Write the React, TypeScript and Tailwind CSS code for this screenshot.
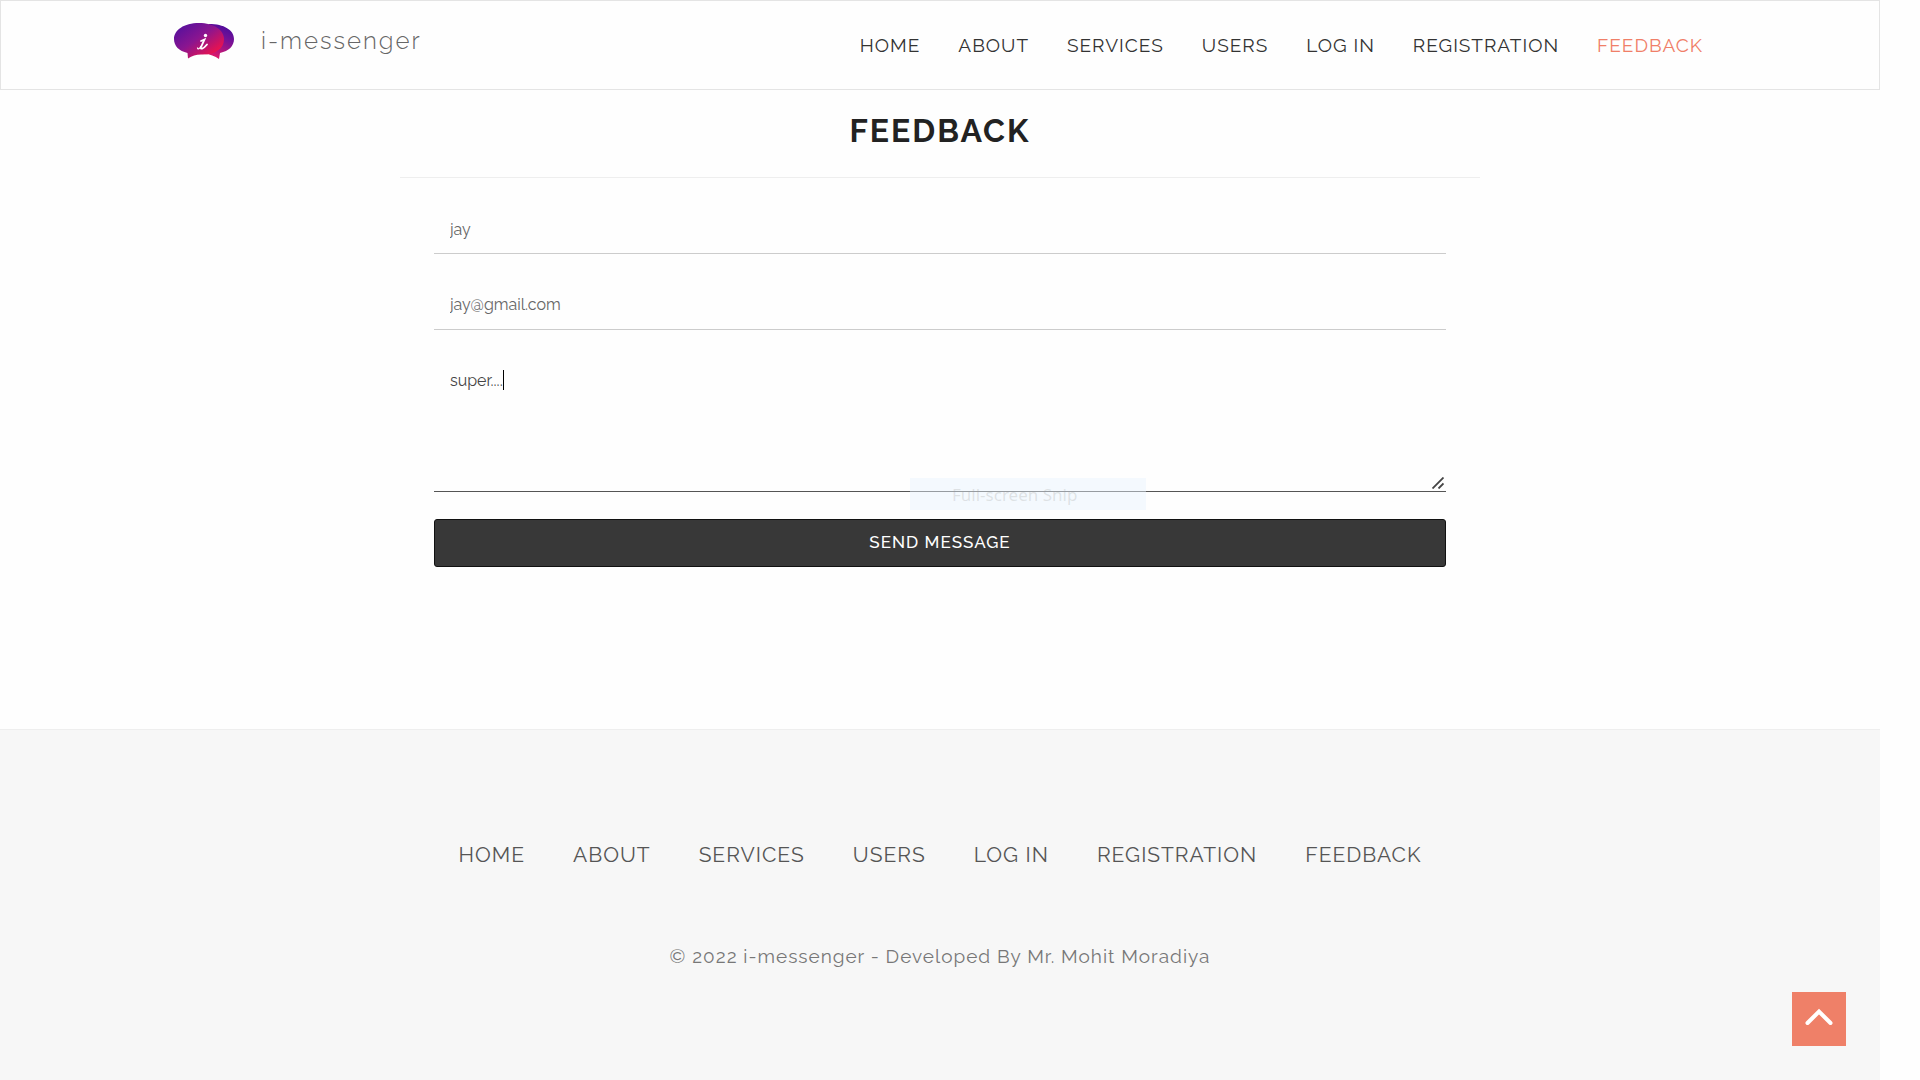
const links = ["HOME", "ABOUT", "SERVICES", "USERS", "LOG IN", "REGISTRATION", "FEEDBACK"];

function Logo() {
  return (
    <svg viewBox="0 0 62 38" className="h-[38px] w-[62px]" aria-hidden="true">
      <defs>
        <linearGradient id="bubbleLeft" x1="0" y1="0" x2="1" y2="1">
          <stop offset="0" stopColor="#4a0fa0" />
          <stop offset="0.45" stopColor="#8a1590" />
          <stop offset="0.85" stopColor="#f0124a" />
        </linearGradient>
        <linearGradient id="bubbleRight" x1="1" y1="0" x2="0.6" y2="1">
          <stop offset="0" stopColor="#3d0a9e" />
          <stop offset="0.5" stopColor="#7a1296" />
          <stop offset="1" stopColor="#d8186c" />
        </linearGradient>
      </defs>
      <path
        d="M36 2 C51 2 61 8 61 17 C61 24 56 29 47 31 L46 37 C42 34 37 32 31 32 Z"
        fill="url(#bubbleRight)"
      />
      <path
        d="M26 1 C41 1 51 8 51 17 C51 27 42 33 28 32.500 C23 32.500 19 34 15 36.500 L14.500 31 C6 29 1 24 1 17 C1 8 11 1 26 1 Z"
        fill="url(#bubbleLeft)"
      />
      <circle cx="32.500" cy="13.500" r="1.700" fill="#fff" />
      <path
        d="M28 19 L31.500 17.500 L28 25 C27 27.500 30 27.500 34 22.500"
        fill="none"
        stroke="#fff"
        strokeWidth="1.800"
        strokeLinecap="round"
      />
      <path d="M28 24 C27 27 24.500 28 24.500 25.500" fill="none" stroke="#fff" strokeWidth="1.200" />
    </svg>
  );
}

export default function App() {
  return (
    <div className="min-h-screen bg-[#fefefe] pr-10 font-['Raleway','Lato',sans-serif] font-normal">
      <div className="flex min-h-screen flex-col">
        <header className="flex h-[90px] items-center justify-between border border-[#e4e4e4] pr-[176px] pl-[172px]">
          <a href="#home" className="flex items-center gap-[26px] pb-2 text-2xl font-light tracking-[2px] text-[#666]">
            <Logo />
            i-messenger
          </a>
          <nav className="flex gap-[38px] text-[19px] tracking-[1px] text-[#333]">
            {links.map((l) => (
              <a key={l} href={`#${l}`} className="last:text-[#f07f68]">
                {l}
              </a>
            ))}
          </nav>
        </header>

        <main className="mx-auto w-full max-w-[1080px] flex-1">
          <h1 className="border-b border-[#eee] pt-[21px] pb-[26px] text-center text-[32px] leading-10 font-bold tracking-[2px] text-[#222]">
            FEEDBACK
          </h1>
          <form className="mx-[34px] flex flex-col pt-7 text-base text-[#666]" onSubmit={(e) => e.preventDefault()}>
            <input
              aria-label="Name"
              defaultValue="jay"
              className="h-12 border-b border-[#ccc] px-4 outline-none"
            />
            <input
              aria-label="Email"
              type="email"
              defaultValue="jay@gmail.com"
              className="mt-7 h-12 border-b border-[#ccc] px-4 pb-[2px] outline-none"
            />
            <div className="relative mt-7">
              <textarea
                aria-label="Message"
                defaultValue="super...."
                className="block h-[134px] w-full resize-none border-b border-[#555] px-4 py-[11px] text-[#444] outline-none"
              />
              <span className="absolute top-3 left-[69px] h-5 w-px bg-black" />
              <svg viewBox="0 0 12 12" className="absolute right-[2px] bottom-[3px] size-3 text-[#444]" aria-hidden="true">
                <path d="M0.500 11.500L11.500 0.500M6.500 11.500L11.500 6.500" stroke="currentColor" strokeWidth="1.800" />
              </svg>
              <div className="absolute -bottom-[18px] left-[476px] h-8 w-[236px] bg-[#e8f3fe]/45 pl-[42px] font-['Noto_Sans',sans-serif] text-[17px] leading-[34px] text-[#999]/25">
                Full-screen Snip
              </div>
            </div>
            <button className="mt-[27px] h-12 rounded-[3px] border border-[#111] bg-[#383838] text-[17px] font-medium tracking-[1px] text-white">
              SEND MESSAGE
            </button>
          </form>
        </main>

        <footer className="flex h-[351px] flex-col items-center border-t border-[#eee] bg-[#f7f7f7] pt-[109px]">
          <nav className="flex gap-12 text-[21px] leading-8 tracking-[1px] text-[#555]">
            {links.map((l) => (
              <a key={l} href={`#${l}`}>
                {l}
              </a>
            ))}
          </nav>
          <p className="mt-[69px] text-[19px] leading-8 tracking-[1px] text-[#777]">
            © 2022 i-messenger - Developed By Mr. Mohit Moradiya
          </p>
        </footer>
      </div>
      <button
        aria-label="Back to top"
        className="fixed right-[74px] bottom-[34px] flex size-[54px] items-center justify-center bg-[#ef8068]"
      >
        <svg viewBox="0 0 28 18" className="mb-1 h-[18px] w-7" aria-hidden="true">
          <path d="M2.500 15L14 3.500L25.500 15" fill="none" stroke="#fff" strokeWidth="4" strokeLinecap="round" />
        </svg>
      </button>
    </div>
  );
}
